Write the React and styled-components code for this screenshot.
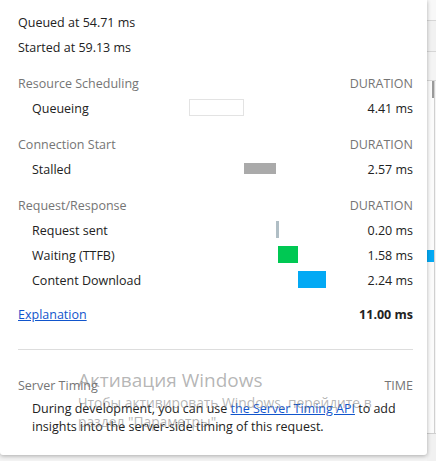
import styled, { createGlobalStyle } from "styled-components"

const GlobalStyle = createGlobalStyle`
  html, body {
    margin: 0;
    padding: 0;
    background: #f3f3f3;
  }
  body {
    font-family: "Open Sans", "Noto Sans", sans-serif;
    font-size: 12.5px;
    color: #222;
  }
`

const total = 11.0
const track = 137

const groups = [
  {
    title: "Resource Scheduling",
    rows: [{ label: "Queueing", start: 0, dur: 4.41, kind: "queue" }]
  },
  {
    title: "Connection Start",
    rows: [{ label: "Stalled", start: 4.41, dur: 2.57, kind: "stalled" }]
  },
  {
    title: "Request/Response",
    rows: [
      { label: "Request sent", start: 6.98, dur: 0.2, kind: "sent" },
      { label: "Waiting (TTFB)", start: 7.18, dur: 1.58, kind: "waiting" },
      { label: "Content Download", start: 8.76, dur: 2.24, kind: "download" }
    ]
  }
]

export default function App() {
  return (
    <Screen>
      <GlobalStyle />
      <Popup>
        <Intro>
          <Line>Queued at 54.71 ms</Line>
          <Line>Started at 59.13 ms</Line>
        </Intro>

        {groups.map((g) => (
          <Group key={g.title}>
            <Row>
              <Header>{g.title}</Header>
              <span />
              <Header $right>DURATION</Header>
            </Row>
            {g.rows.map((r) => (
              <Row key={r.label}>
                <Label>{r.label}</Label>
                <Track>
                  <Bar
                    $kind={r.kind}
                    style={{
                      left: (r.start / total) * track,
                      width: Math.max(3, (r.dur / total) * track)
                    }}
                  />
                </Track>
                <Value>{r.dur.toFixed(2)} ms</Value>
              </Row>
            ))}
          </Group>
        ))}

        <Summary>
          <Link href="#">Explanation</Link>
          <span />
          <Value $bold>11.00 ms</Value>
        </Summary>

        <Divider />

        <Row>
          <Header>Server Timing</Header>
          <span />
          <Header $right>TIME</Header>
        </Row>
        <Note>
          During development, you can use <Link href="#">the Server Timing API</Link> to add
          insights into the server-side timing of this request.
        </Note>

        <Watermark>
          <WmTitle>Активация Windows</WmTitle>
          <WmText>Чтобы активировать Windows, перейдите в</WmText>
          <WmText>раздел "Параметры".</WmText>
        </Watermark>
      </Popup>

      <Backdrop>
        <Band $h={20} $bg="#f8f8f8" />
        <Band $h={30} $bg="#f1f1f1" />
        <Band $h={28} $bg="#f4f4f4" />
        <ScrollArea>
          <Thumb />
          <BlueMark />
        </ScrollArea>
        <Band $h={27} $bg="#f1f1f1" $last />
      </Backdrop>
    </Screen>
  )
}

const Screen = styled.div`
  width: 436px;
  height: 461px;
  display: flex;
  align-items: flex-start;
  overflow: hidden;
`

const Popup = styled.div`
  position: relative;
  z-index: 1;
  flex: 0 0 427px;
  height: 455px;
  box-sizing: border-box;
  padding: 10px 14px 0 18px;
  background: #fff;
  border-radius: 0 0 3px 3px;
  box-shadow: 0 1px 4px rgba(0, 0, 0, 0.3);
`

const Intro = styled.div`
  display: flex;
  flex-direction: column;
`

const Line = styled.div`
  height: 25px;
  line-height: 25px;
`

const Group = styled.div`
  margin-top: 11px;
`

const Row = styled.div`
  display: grid;
  grid-template-columns: 171px ${track}px 1fr;
  align-items: center;
  height: 25px;
  line-height: 25px;
`

const Summary = styled(Row)`
  margin-top: 9px;
`

const Header = styled.span`
  color: #757575;
  white-space: nowrap;
  text-align: ${(p) => (p.$right ? "right" : "left")};
`

const Label = styled.span`
  padding-left: 14px;
  white-space: nowrap;
`

const Value = styled.span`
  text-align: right;
  font-weight: ${(p) => (p.$bold ? 700 : 400)};
`

const Track = styled.div`
  position: relative;
  height: 25px;
`

const barColors = {
  queue: "#fff",
  stalled: "#aaaaaa",
  sent: "#b0bec5",
  waiting: "#00c853",
  download: "#03a9f4"
}

const Bar = styled.div`
  position: absolute;
  top: ${(p) => (p.$kind === "stalled" ? 6 : 3)}px;
  height: ${(p) => (p.$kind === "stalled" ? 11 : 17)}px;
  box-sizing: border-box;
  background: ${(p) => barColors[p.$kind]};
  border: ${(p) => (p.$kind === "queue" ? "1px solid #e3e3e3" : "none")};
`

const Link = styled.a`
  color: #1155cc;
  text-decoration: underline;
`

const Divider = styled.div`
  height: 1px;
  background: #dddddd;
  margin: 22px 0 23px;
`

const Note = styled.p`
  margin: 2px 0 0 14px;
  line-height: 17.5px;
`

const Watermark = styled.div`
  position: absolute;
  left: 78px;
  top: 367px;
  pointer-events: none;
  color: rgba(120, 120, 120, 0.55);
  display: flex;
  flex-direction: column;
`

const WmTitle = styled.div`
  font-size: 19px;
  line-height: 26px;
`

const WmText = styled.div`
  font-size: 13.8px;
  line-height: 19px;
`

const Backdrop = styled.div`
  flex: 1;
  height: 461px;
  display: flex;
  flex-direction: column;
  background: #f4f4f4;
`

const Band = styled.div`
  height: ${(p) => p.$h}px;
  background: ${(p) => p.$bg};
  border-bottom: ${(p) => (p.$last ? "none" : "1px solid #d6d6d6")};
  border-top: ${(p) => (p.$last ? "1px solid #cfcfcf" : "none")};
`

const ScrollArea = styled.div`
  position: relative;
  flex: 1;
  background: #fbfbfb;
  border-right: 1px solid #d0d0d0;
  margin-right: 1px;
`

const Thumb = styled.div`
  position: absolute;
  right: 0;
  top: 0;
  width: 2px;
  height: 17px;
  background: #9a9a9a;
`

const BlueMark = styled.div`
  position: absolute;
  left: 0;
  right: 0;
  top: 169px;
  height: 12px;
  background: #03a9f4;
`
